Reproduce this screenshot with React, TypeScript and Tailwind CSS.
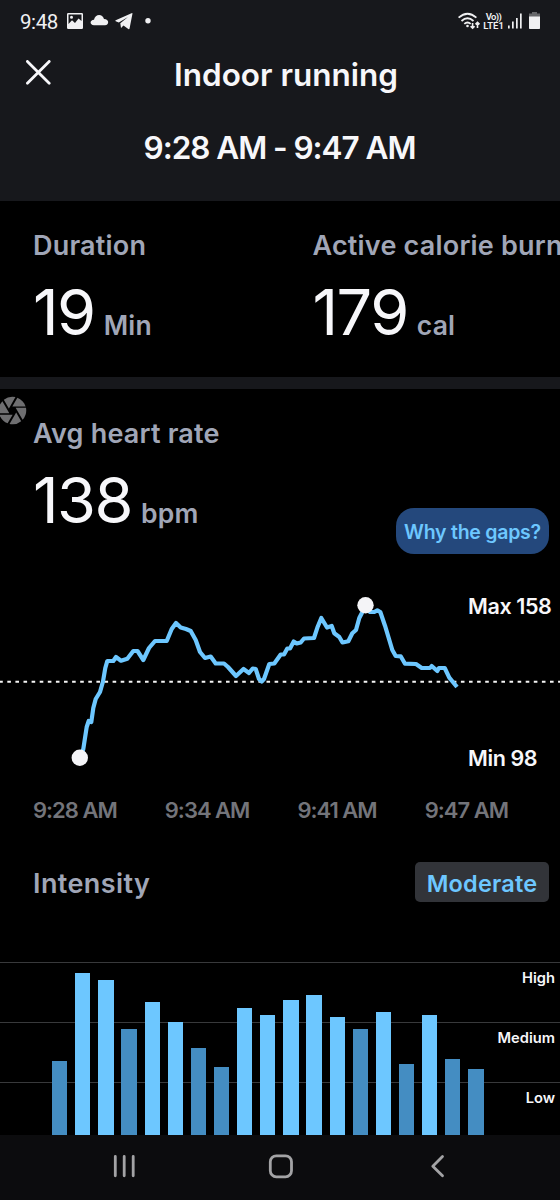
import React from "react";

import {MdCamera} from "react-icons/md";

interface Bar {
  height: number;
  moderate: boolean;
}

const INTENSITY: Bar[] = [
  {height: 74, moderate: false},
  {height: 162, moderate: true},
  {height: 155, moderate: true},
  {height: 106, moderate: false},
  {height: 133.5, moderate: true},
  {height: 113.5, moderate: true},
  {height: 87, moderate: false},
  {height: 68.5, moderate: false},
  {height: 127, moderate: true},
  {height: 120, moderate: true},
  {height: 135, moderate: true},
  {height: 140, moderate: true},
  {height: 118.3, moderate: true},
  {height: 106, moderate: false},
  {height: 123.3, moderate: true},
  {height: 71, moderate: false},
  {height: 120, moderate: true},
  {height: 76.5, moderate: false},
  {height: 66, moderate: false},
];

// y starts at the top of the chart area
const HEART_RATE =
  "80,178 83.3,169 85,158 86.7,147 88.7,141 91.3,142 93.3,128 95.7,119 100,112 103,101.5 105.3,88 107.3,81 113.3,81 116,77 121,80.7 127.3,78.7 133.3,71 137.5,71 143.3,80 149,68 155,61 166.7,61 171.7,49 176,43 180.7,47.5 186,49 190.7,51 195.7,60 200,72 205,78 210.7,76.5 215.7,83.5 224,83.5 228,87 236,96 243.5,89 249,93 252.7,88.5 255.7,89 259,99 261.7,101.5 264,99 269.3,84 274.3,83.5 280.7,74.5 284,74.5 287.3,68.5 290,68.5 293.7,61.5 296.7,63.5 300.7,62.5 304,58.5 314,58 317.7,46.7 321.3,38 327,47.5 331.7,46 334.3,53.3 339.3,57 342.5,62.5 348.3,61.3 352.3,53.3 356,50 359.3,38 362,32.7 365.3,25.3 370,32 374.3,32 377.3,30.3 380.3,32 385,45.7 392.3,70 395.7,76 400.7,76.3 405,83.7 416,84 421.7,88 430,88 431.7,86 437.3,91 439,88 444.7,88 449.3,97.7 457,107";

const StatusBar = (): JSX.Element => (
  <div className="h-11 pl-5 pr-[18px] flex items-center justify-between text-[#f0f0f2]">
    <div className="flex items-center">
      <span className="w-[39px] font-[Roboto] text-[20.5px] leading-none tracking-[-0.4px] whitespace-nowrap">9:48</span>
      <svg className="ml-2 -mt-0.5" width="86" height="18" viewBox="0 0 86 18" fill="currentColor">
        <path fillRule="evenodd" d="M1.2 1H14.8Q16 1 16 2.2V15.8Q16 17 14.8 17H1.2Q0 17 0 15.8V2.2Q0 1 1.2 1ZM1.5 2.5V12L5 8.2L8 11L11.5 6.5L14.5 9V2.5ZM4.5 3.8A1.5 1.5 0 1 1 4.5 6.8A1.5 1.5 0 1 1 4.5 3.8Z" />
        <path d="M27 13.2C22.5 13.2 22.5 8 27 7.8C28 1.6 35.5 1.2 37 7C42.5 7 42.3 13.2 38 13.2Z" />
        <path d="M65.5 1.5L62.5 16.8Q62.2 17.6 61.3 17L56.5 13.4L54 16L53.3 11.2L61 5L51.8 10.4L48.7 9.3Q47.8 8.8 48.7 8.3L64.5 1.2Q65.6 .8 65.5 1.5Z" />
        <circle cx="81" cy="8.8" r="2.7" />
      </svg>
    </div>
    <div className="flex items-center -mt-0.5">
      <svg className="mr-0.5" width="23" height="18" viewBox="0 0 23 18" fill="none" stroke="currentColor" strokeWidth="1.8">
        <path d="M.6 5.7Q9.5-2.3 18.4 5.7M3.5 9Q9.5 3.6 15.5 9M6.3 11.9Q9.5 9 12.7 11.9" />
        <circle cx="9.5" cy="14" r="1.3" fill="currentColor" stroke="none" />
        <path strokeWidth="1.6" d="M14.6 11V16M12.6 14.2L14.6 16.2L16.6 14.2M19.5 16V11M17.5 12.4L19.5 10.4L21.5 12.4" />
      </svg>
      <div className="w-[21px] flex flex-col items-center font-[Roboto] font-semibold text-[9.5px] leading-[9px] whitespace-nowrap">
        <span className="tracking-[-0.6px]">Vo))</span>
        <span>LTE1</span>
      </div>
      <svg className="ml-1" width="34" height="18" viewBox="0 0 34 18" fill="currentColor">
        <path d="M0 13.5H1.7V16.5H0ZM4 9.5H5.7V16.5H4ZM8 6H9.7V16.5H8ZM12 1.5H13.7V16.5H12Z" />
        <path fill="#66676a" d="M24 0H29V1.5H32V5H21V1.5H24Z" />
        <path d="M21 4.5H32V16.2Q32 17 31.2 17H21.8Q21 17 21 16.2Z" />
      </svg>
    </div>
  </div>
);

interface MetricProps {
  label: string;
  value: string;
  unit: string;
}

const Metric = ({label, value, unit}: MetricProps): JSX.Element => (
  <div className="w-[279.5px] shrink-0 whitespace-nowrap">
    <h3 className="text-[27px] leading-8 font-semibold tracking-[0.2px] text-[#a0a6b7]">{label}</h3>
    <div className="mt-3.5 flex items-baseline gap-[9px]">
      <span className="text-[63px] leading-[72px] tracking-[-1.5px] text-[#f7f7fa]">{value}</span>
      <span className="text-[26.5px] leading-8 font-semibold tracking-[0.2px] text-[#a0a6b7]">{unit}</span>
    </div>
  </div>
);

const HeartRateChart = (): JSX.Element => (
  <div className="relative h-[200px]">
    <svg width="560" height="200" viewBox="0 0 560 200" fill="none">
      <path d="M-.8 101.7H560" stroke="#f5f5f5" strokeWidth="2" strokeDasharray="3.6 4.5" />
      <polyline points={HEART_RATE} stroke="#6dc7ff" strokeWidth="4.2" strokeLinejoin="round" />
      <circle cx="79.8" cy="177.8" r="8.2" fill="#f4f4f7" />
      <circle cx="365.5" cy="25.2" r="8.2" fill="#f4f4f7" />
    </svg>
    <span className="absolute left-[468px] top-[13px] text-[21.5px] leading-[26px] font-semibold tracking-[-0.4px] whitespace-nowrap text-[#f7f7fa]">Max 158</span>
    <span className="absolute left-[468px] top-[165px] text-[21.5px] leading-[26px] font-semibold tracking-[-0.4px] whitespace-nowrap text-[#f7f7fa]">Min 98</span>
  </div>
);

const IntensityChart = (): JSX.Element => (
  <div className="relative mt-[60px] h-[173px] overflow-hidden">
    <div className="flex flex-col text-right text-[14.7px] leading-[22px] font-semibold text-[#f7f7fa]">
      <div className="h-[60px] border-t border-[#38393b] pt-1 pr-[5px]">High</div>
      <div className="h-[60px] border-t border-[#38393b] pt-1 pr-[5px]">Medium</div>
      <div className="h-[60px] border-t border-[#38393b] pt-1 pr-[5px]">Low</div>
    </div>
    <div className="absolute left-[52px] bottom-0 flex items-end gap-[7.8px]">
      {INTENSITY.map((bar, index) => (
        <div key={index} className={bar.moderate ? "w-[15.33px] bg-[#6dc7ff]" : "w-[15.33px] bg-[#448dc2]"} style={{height: bar.height}} />
      ))}
    </div>
  </div>
);

const App = (): JSX.Element => {
  return (
    <div className="w-[560px] h-[1200px] bg-black overflow-hidden flex flex-col font-[Inter,'Liberation_Sans',sans-serif]">
      <header className="h-[201px] shrink-0 bg-[#17181c] text-[#f7f7fa]">
        <StatusBar />
        <div className="h-[61px] px-[26px] grid grid-cols-[26px_1fr_26px] items-center">
          <svg className="-mt-1" width="25" height="25" viewBox="0 0 25 25" stroke="currentColor" strokeWidth="2.8" strokeLinecap="round">
            <path d="M1.4 1.4L23.2 23.2M23.2 1.4L1.4 23.2" />
          </svg>
          <h1 className="ml-3 text-center text-[31.5px] leading-9 font-semibold whitespace-nowrap">Indoor running</h1>
        </div>
        <h2 className="mt-[25px] pr-px text-center text-[31.5px] leading-9 font-semibold tracking-[-1.05px] whitespace-nowrap">9:28 AM - 9:47 AM</h2>
      </header>

      <section className="h-44 shrink-0 pl-[33px] pt-[29px] flex overflow-hidden">
        <Metric label="Duration" value="19" unit="Min" />
        <Metric label="Active calorie burn" value="179" unit="cal" />
      </section>

      <div className="h-3 shrink-0 bg-[#17181c]" />

      <section className="relative h-[746px] shrink-0">
        <MdCamera className="absolute left-[-4px] top-[5px] size-[33px] text-[#6e6e70]" />
        <div className="h-[191px] pl-[33px] pt-[29px]">
          <Metric label="Avg heart rate" value="138" unit="bpm" />
        </div>
        <button className="absolute left-[396px] top-[119px] w-[153px] h-[46px] pt-[3px] rounded-[18px] bg-[#24487c] text-[19.5px] font-semibold tracking-[-0.25px] whitespace-nowrap text-[#6dc7ff]">
          Why the gaps?
        </button>
        <HeartRateChart />
        <div className="mt-[17px] pl-[33px] pr-[52px] h-[26px] flex justify-between text-[22px] leading-[26px] font-semibold tracking-[-1px] text-[#73747a]">
          <span>9:28 AM</span>
          <span>9:34 AM</span>
          <span>9:41 AM</span>
          <span>9:47 AM</span>
        </div>
        <div className="mt-[39px] h-10 pl-[33px] pr-[11px] flex items-center justify-between">
          <h3 className="mt-1 text-[27px] leading-8 font-semibold tracking-[0.4px] text-[#a0a6b7]">Intensity</h3>
          <div className="w-[134px] h-10 pt-[3px] rounded-[5px] bg-[#323439] flex items-center justify-center text-[23.5px] font-semibold tracking-[0.2px] text-[#6dc7ff]">Moderate</div>
        </div>
        <IntensityChart />
      </section>

      <nav className="h-[65px] shrink-0 bg-[#0c0c0e]">
        <svg width="560" height="65" viewBox="0 0 560 65" fill="none" stroke="#a3a3a5" strokeWidth="2.8" strokeLinecap="round" strokeLinejoin="round">
          <path d="M115.3 21.5V40.8M124.2 21.5V40.8M133.2 21.5V40.8" />
          <rect x="270.3" y="20.8" width="21.2" height="21" rx="6" />
          <path d="M442.5 21.5L432.8 31.2L442.5 40.8" />
        </svg>
      </nav>
    </div>
  );
}


export default App;
